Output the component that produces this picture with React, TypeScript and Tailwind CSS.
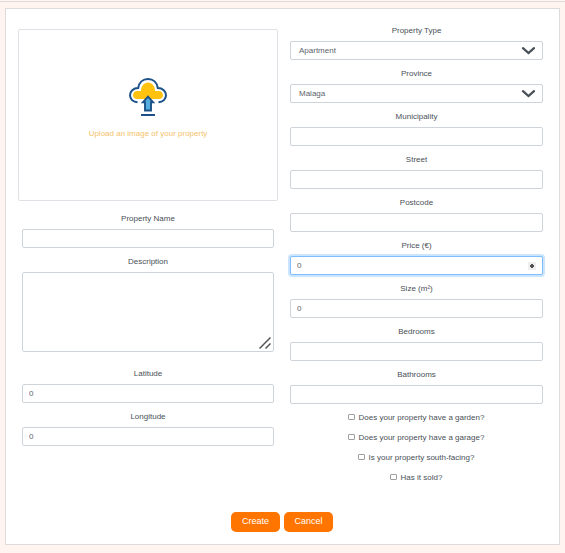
import type { ReactNode } from "react";

const box = "rounded-[2px] border border-[#ced4da] bg-white";

function Field({ label, children }: { label: string; children?: ReactNode }) {
  return (
    <label className="block w-full">
      <span className="block h-6 pt-0.5 text-center leading-6">{label}</span>
      {children ?? <TextBox />}
    </label>
  );
}

function TextBox({ value = "" }: { value?: string }) {
  return <input readOnly value={value} className={`block h-[19px] w-full px-1.5 text-[#5c646c] outline-none ${box}`} />;
}

function SelectBox({ value }: { value: string }) {
  return (
    <span className={`flex h-[19px] w-full items-center justify-between pr-[7px] pl-2 text-[#5c646c] ${box}`}>
      {value}
      <svg width="14" height="9" viewBox="0 0 14 9" fill="none" stroke="#495057" strokeWidth="2.300">
        <path d="M2 2.200 7.500 7l5.500-4.800" strokeLinecap="round" />
      </svg>
    </span>
  );
}

function PriceBox() {
  return (
    <span className="flex h-[19px] w-full items-center justify-between rounded-[2px] border border-[#80bdff] bg-white pr-1.5 pl-1.5 text-[#5c646c] shadow-[0_0_0_2px_#cce5ff]">
      0
      <svg width="8" height="8" viewBox="0 0 8 8" className="bg-[#efefef]">
        <path d="M3 2h2v1h1v2H5v1H3V5H2V3h1z" fill="#505050" />
      </svg>
    </span>
  );
}

function Check({ label }: { label: string }) {
  return (
    <label className="flex h-5 items-center justify-center gap-1 pr-px">
      <span className="h-1.5 w-[7px] rounded-[1px] border border-[#a0a0a0] bg-white" />
      <span className="pt-px">{label}</span>
    </label>
  );
}

function UploadIcon() {
  return (
    <svg width="38" height="38" viewBox="0 0 38 38" fill="none">
      <path
        d="M8 21C5.700 21 4 19.300 4 17.200S5.700 13 8 13h4c0-4.800 2.900-8.500 7-8.500s7 3.700 7 8.500h4c2.300 0 4 2.100 4 4.200S32.300 21 30 21z"
        fill="#ffc20e"
      />
      <path
        d="M8.500 24.200C4 24.200 1 21 1 17.300c0-4 3.200-7.300 8.200-7.300C10 4.600 13.700 1 19 1s9 3.600 9.800 9c5 0 8.200 3.300 8.200 7.300 0 3.700-3 6.900-7.500 6.900"
        stroke="#1c5288"
        strokeWidth="2"
      />
      <path d="M19 18.700 13.900 24.200H16V32.500h6V24.200h2.100z" fill="#56ade0" stroke="#1c5288" strokeWidth="1.900" />
      <path d="M12 37h14" stroke="#1c5288" strokeWidth="2" />
    </svg>
  );
}

function ActionButton({ children }: { children: ReactNode }) {
  return (
    <button className="h-5 w-[49px] rounded-[5px] bg-[#ff7500] pb-0.5 text-center text-[9px] leading-[18px] text-white">
      {children}
    </button>
  );
}

export default function App() {
  return (
    <div className="h-[553px] w-[565px] bg-[#fff4ef] pt-px font-['Liberation_Sans',Arial,sans-serif] text-[8px] text-[#495057]">
      <div className="h-[7px] border-t border-[#dcdcdc]" />
      <form className="ml-[5px] flex h-[537px] w-[555px] flex-col border border-[#dcdcdf] bg-white pl-3">
        <div className="flex h-[503px] gap-3">
          <div className="w-[260px] pt-5">
            <div className="flex h-[172px] flex-col items-center rounded-[2px] border border-[#dee2e6] pt-12">
              <UploadIcon />
              <p className="mt-3 leading-3 text-[#f5c36b]">Upload an image of your property</p>
            </div>
            <div className="flex flex-col px-1 pt-1">
              <Field label="Property Name" />
              <Field label="Description">
                <span className={`flex h-20 w-full items-end justify-end p-[2px] ${box}`}>
                  <svg width="12" height="12" viewBox="0 0 12 12" stroke="#555" strokeWidth="1.500">
                    <path d="M.5 11.500 11.500.5M6.500 11.500l5-5" />
                  </svg>
                </span>
              </Field>
              <div className="h-2" />
              <Field label="Latitude"><TextBox value="0" /></Field>
              <Field label="Longitude"><TextBox value="0" /></Field>
            </div>
          </div>
          <div className="w-[253px] pt-2">
            <Field label="Property Type"><SelectBox value="Apartment" /></Field>
            <Field label="Province"><SelectBox value="Malaga" /></Field>
            <Field label="Municipality" />
            <Field label="Street" />
            <Field label="Postcode" />
            <Field label="Price (€)"><PriceBox /></Field>
            <Field label="Size (m²)"><TextBox value="0" /></Field>
            <Field label="Bedrooms" />
            <Field label="Bathrooms" />
            <div className="pt-[3px]">
              <Check label="Does your property have a garden?" />
              <Check label="Does your property have a garage?" />
              <Check label="Is your property south-facing?" />
              <Check label="Has it sold?" />
            </div>
          </div>
        </div>
        <div className="flex gap-1 pl-[213px]">
          <ActionButton>Create</ActionButton>
          <ActionButton>Cancel</ActionButton>
        </div>
      </form>
    </div>
  );
}
